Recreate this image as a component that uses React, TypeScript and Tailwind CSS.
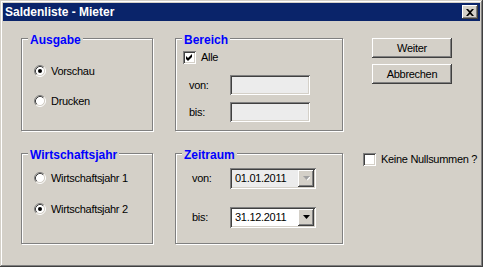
import React from 'react';

const sunken =
  'shadow-[inset_1px_1px_0_#808080,inset_-1px_-1px_0_#ffffff,inset_2px_2px_0_#404040,inset_-2px_-2px_0_#d4d0c8]';
const raised =
  'shadow-[inset_-1px_-1px_0_#404040,inset_1px_1px_0_#ffffff,inset_-2px_-2px_0_#808080,inset_2px_2px_0_#d4d0c8]';

function Radio({ checked }: { checked?: boolean }) {
  return (
    <svg width="12" height="12" viewBox="0 0 12 12" className="shrink-0">
      <circle cx="6" cy="6" r="4.5" fill="#ffffff" />
      <path d="M2.11 9.89 A5.5 5.5 0 0 1 9.89 2.11" fill="none" stroke="#808080" strokeWidth="1" />
      <path d="M9.89 2.11 A5.5 5.5 0 0 1 2.11 9.89" fill="none" stroke="#ffffff" strokeWidth="1" />
      <path d="M2.82 9.18 A4.5 4.5 0 0 1 9.18 2.82" fill="none" stroke="#404040" strokeWidth="1" />
      <path d="M9.18 2.82 A4.5 4.5 0 0 1 2.82 9.18" fill="none" stroke="#d4d0c8" strokeWidth="1" />
      {checked && <circle cx="6" cy="6" r="2" fill="#000000" />}
    </svg>
  );
}

function Check({ checked }: { checked?: boolean }) {
  return (
    <div className={`relative w-[13px] h-[13px] shrink-0 bg-white ${sunken}`}>
      {checked && (
        <svg width="13" height="13" viewBox="0 0 13 13" className="absolute left-0 top-0">
          <path d="M3 5 L5 7 L9 3 L9 6 L5 10 L3 8 Z" fill="#000000" />
        </svg>
      )}
    </div>
  );
}

function Group({ title, className, children }: { title: string; className?: string; children: React.ReactNode }) {
  return (
    <div
      className={`relative border border-[#808080] shadow-[1px_1px_0_#ffffff,inset_1px_1px_0_#ffffff] ${className ?? ''}`}
    >
      <span className="absolute left-[6px] top-[-6px] px-[2px] bg-[#d4d0c8] text-[#0000ff] font-bold text-[12px] leading-[14px] tracking-normal">
        {title}
      </span>
      {children}
    </div>
  );
}

function Combo({ value, disabled }: { value: string; disabled?: boolean }) {
  return (
    <div className={`flex w-[86px] h-[21px] p-[2px] ${disabled ? 'bg-[#ececec]' : 'bg-white'} ${sunken}`}>
      <div className="flex-1 pl-[3px] leading-[17px]">{value}</div>
      <div className={`w-[16px] h-[17px] bg-[#d4d0c8] flex items-center justify-center ${raised}`}>
        <svg width="7" height="5" viewBox="0 0 7 5">
          {disabled && <path d="M1 1 H8 L4.5 4.5 Z" fill="#ffffff" />}
          <path d="M0 0 H7 L3.5 4 Z" fill={disabled ? '#a0a0a0' : '#000000'} />
        </svg>
      </div>
    </div>
  );
}

export default function App() {
  return (
    <div className="w-[483px] h-[267px] bg-[#d4d0c8] p-[3px] flex flex-col font-['Liberation_Sans',Arial,sans-serif] text-[11px] text-black tracking-[-0.3px] shadow-[inset_-1px_-1px_0_#404040,inset_1px_1px_0_#d4d0c8,inset_-2px_-2px_0_#808080,inset_2px_2px_0_#ffffff]">
      {/* title bar */}
      <div className="h-[18px] bg-[#0a246a] flex items-center justify-between pl-[2px] pr-[2px]">
        <span className="text-white font-bold text-[12px] leading-[18px] tracking-normal">Saldenliste - Mieter</span>
        <div className={`w-[16px] h-[14px] bg-[#d4d0c8] flex items-center justify-center ${raised}`}>
          <svg width="8" height="7" viewBox="0 0 8 7">
            <path d="M0 0 H2 L4 2 L6 0 H8 L5 3.5 L8 7 H6 L4 5 L2 7 H0 L3 3.5 Z" fill="#000000" />
          </svg>
        </div>
      </div>

      {/* body */}
      <div className="grid grid-cols-[154px_188px_1fr] grid-rows-[93px_91px] gap-y-[22px] pt-[17px] pl-[18px]">
        <Group title="Ausgabe" className="w-[132px]">
          <div className="flex flex-col gap-[16px] pt-[25px] pl-[12px]">
            <label className="flex items-center gap-[5px] h-[14px]">
              <Radio checked />
              <span>Vorschau</span>
            </label>
            <label className="flex items-center gap-[5px] h-[14px]">
              <Radio />
              <span>Drucken</span>
            </label>
          </div>
        </Group>

        <Group title="Bereich" className="w-[168px]">
          <div className="flex flex-col pt-[12px] pl-[7px]">
            <label className="flex items-center gap-[5px] h-[13px]">
              <Check checked />
              <span>Alle</span>
            </label>
            <div className="flex flex-col gap-[7px] mt-[11px]">
              <div className="flex items-center">
                <span className="w-[47px] pl-[6px]">von:</span>
                <div className={`w-[80px] h-[20px] bg-[#ececec] ${sunken}`} />
              </div>
              <div className="flex items-center">
                <span className="w-[47px] pl-[6px]">bis:</span>
                <div className={`w-[80px] h-[20px] bg-[#ececec] ${sunken}`} />
              </div>
            </div>
          </div>
        </Group>

        <div className="flex flex-col gap-[6px] pl-[9px]">
          <button className={`w-[80px] h-[20px] bg-[#d4d0c8] text-center leading-[20px] ${raised}`}>Weiter</button>
          <button className={`w-[80px] h-[20px] bg-[#d4d0c8] text-center leading-[20px] ${raised}`}>Abbrechen</button>
        </div>

        <Group title="Wirtschaftsjahr" className="w-[132px]">
          <div className="flex flex-col gap-[17px] pt-[17px] pl-[12px]">
            <label className="flex items-center gap-[5px] h-[14px]">
              <Radio />
              <span>Wirtschaftsjahr 1</span>
            </label>
            <label className="flex items-center gap-[5px] h-[14px]">
              <Radio checked />
              <span>Wirtschaftsjahr 2</span>
            </label>
          </div>
        </Group>

        <Group title="Zeitraum" className="w-[168px]">
          <div className="flex flex-col gap-[18px] pt-[14px]">
            <div className="flex items-center">
              <span className="w-[54px] pl-[16px]">von:</span>
              <Combo value="01.01.2011" disabled />
            </div>
            <div className="flex items-center">
              <span className="w-[54px] pl-[16px]">bis:</span>
              <Combo value="31.12.2011" />
            </div>
          </div>
        </Group>

        <div>
          <label className="flex items-center gap-[5px] h-[13px]">
            <Check />
            <span>Keine Nullsummen ?</span>
          </label>
        </div>
      </div>
    </div>
  );
}
